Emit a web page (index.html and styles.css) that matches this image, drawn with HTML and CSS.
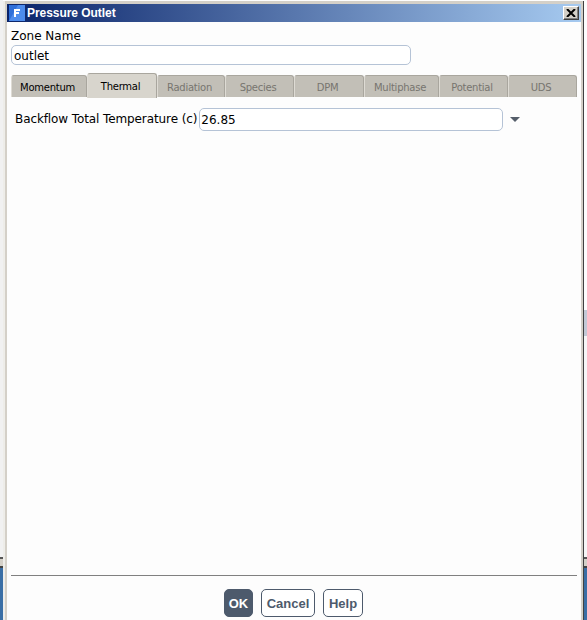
FILE: index.html
```html
<!DOCTYPE html>
<html lang="en">
<head>
  <meta charset="UTF-8">
  <title>Pressure Outlet</title>
  <link rel="stylesheet" href="styles.css">
</head>
<body>
  <div class="desktop">
    <!-- Bits of the windows behind the dialog -->
    <div class="behind-left">
      <div class="behind-pane"></div>
      <div class="behind-bar"></div>
      <div class="behind-blue"></div>
    </div>

    <div class="dialog">
      <div class="titlebar">
        <svg class="app-icon" width="16" height="16" viewBox="0 0 16 16">
          <rect width="16" height="16" fill="#2f6fd8"/>
          <path d="M0 16 L9 0 H16 V16 Z" fill="#4d8cec"/>
          <rect x="5" y="4" width="2" height="8" fill="#fff"/>
          <rect x="5" y="4" width="6" height="2" fill="#fff"/>
          <rect x="5" y="7" width="5" height="2" fill="#fff"/>
        </svg>
        <span class="title">Pressure Outlet</span>
        <button class="close">
          <svg width="10" height="8" viewBox="0 0 10 8"><path d="M1 0 L9 8 M9 0 L1 8" stroke="#000" stroke-width="2"/></svg>
        </button>
      </div>

      <div class="content">
        <label class="zone-label">Zone Name</label>
        <input class="zone-input" type="text" value="outlet">

        <div class="tabs">
          <div class="tab enabled">Momentum</div>
          <div class="tab active">Thermal</div>
          <div class="tab">Radiation</div>
          <div class="tab">Species</div>
          <div class="tab">DPM</div>
          <div class="tab">Multiphase</div>
          <div class="tab">Potential</div>
          <div class="tab">UDS</div>
        </div>

        <div class="tab-panel">
          <label class="field-label">Backflow Total Temperature (c)</label>
          <input class="field-input" type="text" value="26.85">
          <div class="arrow"></div>
        </div>

        <div class="footer">
          <button class="btn btn-ok">OK</button>
          <button class="btn btn-cancel">Cancel</button>
          <button class="btn btn-help">Help</button>
        </div>
      </div>
    </div>

    <div class="behind-right">
      <div class="behind-white"></div>
      <div class="behind-scroll"></div>
      <div class="behind-pane-short"></div>
      <div class="behind-bar"></div>
      <div class="behind-blue"></div>
    </div>
  </div>
</body>
</html>
```

FILE: styles.css
```css
/* Base */
html, body {
  margin: 0;
  height: 620px;
  overflow: hidden;
  background-color: #fdfdfd;
  font-family: "DejaVu Sans", sans-serif;
}
.desktop {
  display: flex;
  height: 620px;
}

/* Windows behind the dialog */
.behind-left, .behind-right {
  display: flex;
  flex-direction: column;
  width: 3px;
  flex: none;
}
.behind-pane {
  height: 557px;
  background-color: #f1f1f1;
}
.behind-white {
  height: 310px;
  background-color: #fdfdfd;
}
.behind-scroll {
  height: 26px;
  background-color: #c3c9d6;
}
.behind-pane-short {
  height: 221px;
  background-color: #f6f6f6;
}
.behind-bar {
  height: 11px;
  box-sizing: border-box;
  border-top: 2px solid #555555;
  border-bottom: 2px solid #444444;
  background-color: #d4d0c8;
}
.behind-blue {
  flex: 1;
  background-color: #3a6ea5;
}

/* Dialog frame */
.dialog {
  flex: 1;
  display: flex;
  flex-direction: column;
  margin-top: 1px;
  padding: 3px 2px 0 2px;
  background-color: #d4d0c8;
  border-left: 2px solid #eeede9;
  border-right: 1px solid #404040;
}
.titlebar {
  display: flex;
  align-items: center;
  height: 18px;
  flex: none;
  background: linear-gradient(to right, #0a246a, #a6caf0);
}
.app-icon {
  margin-left: 2px;
  flex: none;
}
.title {
  flex: 1;
  margin-left: 2px;
  font-family: "Liberation Sans", sans-serif;
  font-size: 12px;
  font-weight: bold;
  letter-spacing: -0.05px;
  color: #ffffff;
}
.close {
  display: flex;
  align-items: center;
  justify-content: center;
  width: 16px;
  height: 14px;
  padding: 0;
  margin-right: 2px;
  background-color: #d4d0c8;
  border: 1px solid;
  border-color: #ffffff #404040 #404040 #ffffff;
  box-shadow: inset -1px -1px 0 #808080;
}

/* Content */
.content {
  flex: 1;
  display: flex;
  flex-direction: column;
  padding: 0 4px 0 4px;
  background-color: #fdfdfd;
}
.zone-label {
  margin-top: 6px;
  height: 17px;
  line-height: 17px;
  font-size: 12px;
  color: #000000;
}
.zone-input {
  width: 400px;
  height: 20px;
  box-sizing: border-box;
  padding: 1px 2px 0;
  border: 1px solid #b5c3d6;
  border-radius: 5px;
  background-color: #ffffff;
  font-family: "DejaVu Sans", sans-serif;
  font-size: 12px;
  color: #000000;
}

/* Tabs */
.tabs {
  display: grid;
  grid-template-columns: 76px 70px 68px 69px 70px 75px 69px 69px;
  height: 22px;
  margin-top: 10px;
  border-bottom: 1px solid #aaa79f;
  box-sizing: border-box;
}
.tab {
  height: 22px;
  box-sizing: border-box;
  padding-right: 3px;
  border: 1px solid #a9a69e;
  border-left-color: #dedbd4;
  border-bottom: none;
  border-radius: 3px 3px 0 0;
  background-color: #c2bfb7;
  font-size: 10px;
  letter-spacing: -0.25px;
  line-height: 23px;
  text-align: center;
  color: #77756f;
}
.tab.enabled {
  color: #000000;
}
.tab.active {
  position: relative;
  top: -2px;
  height: 25px;
  background-color: #d8d5cd;
  color: #000000;
  line-height: 25px;
}

/* Tab panel */
.tab-panel {
  flex: 1;
  display: flex;
  align-items: flex-start;
  padding: 11px 0 0 4px;
}
.field-label {
  height: 23px;
  line-height: 22px;
  font-size: 12px;
  letter-spacing: -0.1px;
  color: #000000;
}
.field-input {
  width: 304px;
  height: 23px;
  margin-left: 2px;
  box-sizing: border-box;
  padding: 1px 1px 0;
  border: 1px solid #b5c3d6;
  border-radius: 5px;
  background-color: #ffffff;
  font-family: "DejaVu Sans", sans-serif;
  font-size: 12px;
  color: #000000;
}
.arrow {
  width: 0;
  height: 0;
  margin: 9px 0 0 7px;
  border-left: 5px solid transparent;
  border-right: 5px solid transparent;
  border-top: 5px solid #555e6a;
}

/* Footer */
.footer {
  display: flex;
  justify-content: center;
  gap: 8px;
  height: 45px;
  padding-top: 13px;
  padding-right: 1px;
  border-top: 1px solid #808080;
  box-sizing: border-box;
}
.btn {
  height: 28px;
  padding: 0;
  border: 1px solid #4d5a6c;
  border-radius: 5px;
  background-color: #ffffff;
  font-family: "Liberation Sans", sans-serif;
  font-size: 13px;
  font-weight: bold;
  color: #4d5a6c;
}
.btn-ok {
  width: 29px;
  background-color: #4d5a6c;
  color: #ffffff;
}
.btn-cancel {
  width: 54px;
}
.btn-help {
  width: 40px;
}
```
